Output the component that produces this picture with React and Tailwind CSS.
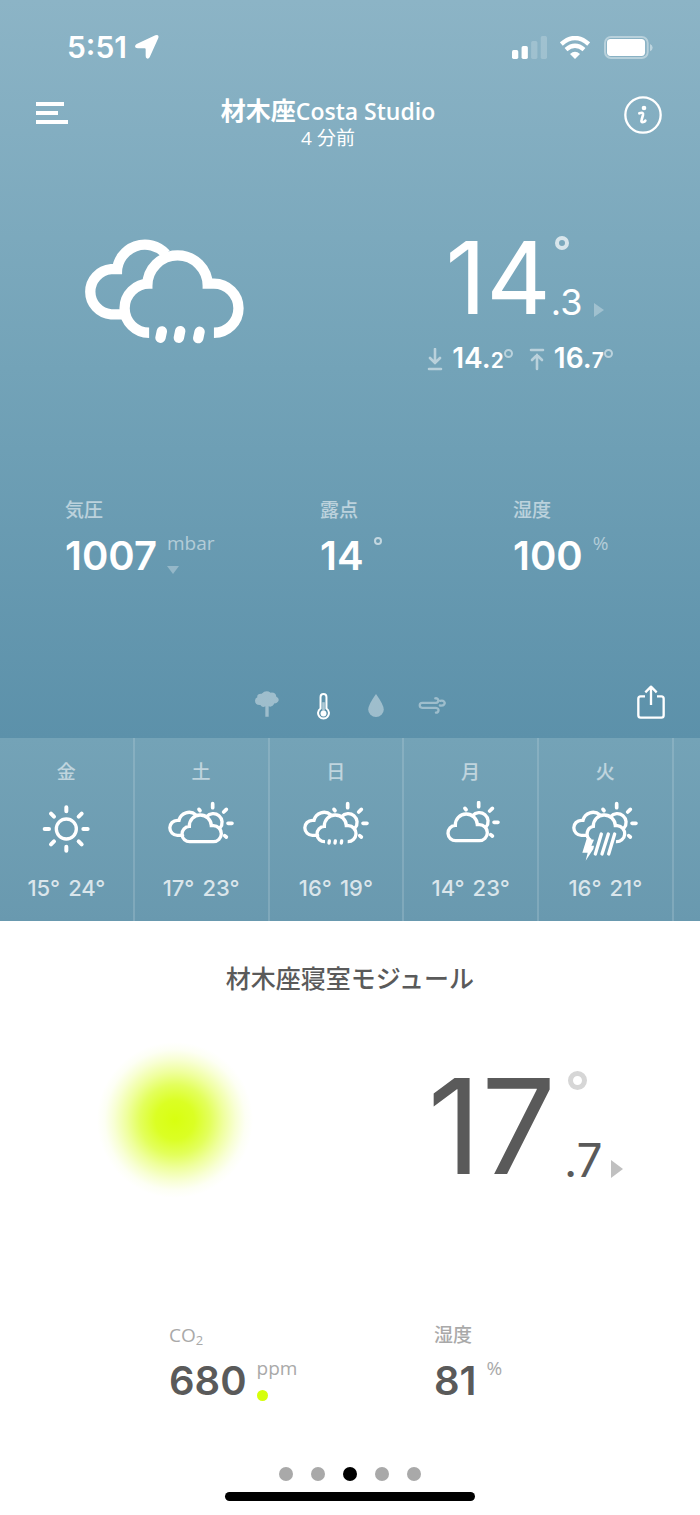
import React from "react";

const DAYS = [
  { day: "金", icon: "sun", low: 15, high: 24, name: "晴れ" },
  { day: "土", icon: "clouds", low: 17, high: 23, name: "曇り時々晴れ" },
  { day: "日", icon: "rain", low: 16, high: 19, name: "小雨" },
  { day: "月", icon: "partly", low: 14, high: 23, name: "晴れ時々曇り" },
  { day: "火", icon: "storm", low: 16, high: 21, name: "雷雨" },
];

const BACK_CLOUD = "M548 286H532A22.5 22.5 0 0 1 532 241H537A31 31 0 0 1 588 225";
const CLOSED_CLOUD = "M570 305A23 23 0 0 1 568 259A33 33 0 0 1 634 257H640A23.5 23.5 0 0 1 640 305Z";
const OPEN_CLOUD = "M570 305A23 23 0 0 1 568 259A33 33 0 0 1 634 257H640A23.5 23.5 0 0 1 638 305";
const HIDDEN_SUN = "M620 230A26 26 0 0 1 660 264";
const HIDDEN_RAYS = "M638 191V203M671 216L679 208M684 250H696M674 287L679 291M597 208L600 212";

function ForecastIcon({ kind, label }) {
  const box = {
    sun: "101 183 198 180",
    clouds: "504 183 198 180",
    rain: "504 183 198 180",
    partly: "516 186 198 180",
    storm: "504 183 198 180",
  }[kind];
  return (
    <svg
      role="img"
      aria-label={label}
      viewBox={box}
      className="h-[60px] w-[66px]"
      fill="none"
      stroke="white"
      strokeWidth="10"
    >
      {kind === "sun" ? (
        <>
          <circle cx="201" cy="267" r="30" />
          <path
            strokeLinecap="round"
            strokeWidth="12"
            d="M201 202V214M201 320V332M136 267H149M252 267H265M155 221L164 230M238 304L247 313M155 313L164 304M238 230L247 221"
          />
        </>
      ) : (
        <>
          <path strokeLinecap="round" d={HIDDEN_SUN} />
          <path strokeLinecap="round" strokeWidth="11" d={HIDDEN_RAYS} />
        </>
      )}
      {kind === "clouds" && <path strokeLinecap="round" d={BACK_CLOUD + CLOSED_CLOUD} />}
      {kind === "partly" && <path strokeLinecap="round" d={CLOSED_CLOUD} />}
      {kind === "rain" && (
        <>
          <path strokeLinecap="round" d={BACK_CLOUD} />
          <path d={OPEN_CLOUD} />
          <path strokeLinecap="round" d="M583 303L582 309M601 303L600 309M620 303L619 309" />
        </>
      )}
      {kind === "storm" && (
        <>
          <path strokeLinecap="round" d={BACK_CLOUD} />
          <path d="M560 301A23 23 0 0 1 568 259A33 33 0 0 1 634 257H640A23.5 23.5 0 0 1 636 305" />
          <path strokeLinecap="round" d="M592 282L574 342M613 282L594 342M632 282L614 342" />
          <path fill="white" stroke="none" d="M548 296L570 299L562 317H570L568 327L545 362L551 338H535Z" />
        </>
      )}
    </svg>
  );
}

function Metric({ label, value, unit, dark, children }) {
  return (
    <div>
      <h3 className={"h-6 text-[19px] leading-6 font-medium " + (dark ? "text-[#a9a9a9]" : "text-white/55")}>{label}</h3>
      <div className="mt-[9px] flex">
        <span
          className={
            "font-['Inter'] text-[40px] leading-[50px] font-semibold " + (dark ? "text-[#5a5a5a]" : "text-white")
          }
        >
          {value}
        </span>
        <span className="ml-[10px] flex flex-col">
          <span className={"text-[19px] leading-6 " + (dark ? "text-[#a9a9a9]" : "text-white/50")}>{unit}</span>
          {children}
        </span>
      </div>
    </div>
  );
}

function Extreme({ whole, tenth, path, label }) {
  return (
    <div className="flex items-center" aria-label={label}>
      <svg viewBox="0 0 16 24" className="mr-[9px] h-6 w-4 opacity-50" fill="none" stroke="white" strokeWidth="2.6" strokeLinecap="round">
        <path d={path} />
      </svg>
      <span className="font-['Inter'] text-[28px] leading-7 font-semibold">
        {whole}.<span className="text-[21px]">{tenth}</span>
      </span>
      <span className="mb-3 h-[9px] w-[9px] rounded-full border-2 border-white/50" />
    </div>
  );
}

export default function App() {
  return (
    <main className="min-h-screen w-full overflow-hidden bg-white font-['Open_Sans','Noto_Sans_CJK_JP',sans-serif]">
      <section className="bg-linear-to-b from-[#8cb4c6] via-[#73a3b8] to-[#5c91aa] text-white">
        <div className="flex h-[62px] items-end justify-between pr-[47px] pl-[67px]">
          <div className="flex items-center gap-2">
            <time className="font-['Inter'] text-[30px] leading-[30px] font-semibold">5:51</time>
            <svg viewBox="0 0 72 72" className="h-6 w-6" fill="white" aria-hidden="true">
              <path d="M5 27L61 1Q73 -3 70 9L44 67Q40 73 35 70Q32 68 32 62V43Q32 40 29 40H8Q0 40 0 34Q1 29 5 27Z" />
            </svg>
          </div>
          <div className="flex h-[30px] items-center">
            <svg viewBox="0 0 106 69" className="h-[23px] w-[35px]" fill="white" aria-label="電波">
              <rect y="42" width="19" height="27" rx="5" />
              <rect x="29" y="30" width="19" height="39" rx="5" />
              <rect x="58" y="15" width="19" height="54" rx="5" opacity=".2" />
              <rect x="87" y="0" width="19" height="69" rx="5" opacity=".2" />
            </svg>
            <svg viewBox="0 0 90 69" className="ml-[13px] h-[23px] w-[30px]" fill="none" stroke="white" strokeWidth="13" aria-label="Wi-Fi">
              <path d="M4 24Q45 -12 86 24M18 41Q45 18 72 41" />
              <path d="M30 54Q45 41 60 54L45 69Z" fill="white" stroke="none" />
            </svg>
            <svg viewBox="0 0 148 69" className="ml-[14px] h-[23px] w-[49px]" fill="none" aria-label="バッテリー">
              <rect x="3" y="3" width="129" height="63" rx="18" stroke="white" strokeOpacity=".4" strokeWidth="6" />
              <rect x="9" y="9" width="115" height="51" rx="11" fill="white" />
              <path d="M139 24Q147 28 147 35T139 46Z" fill="white" opacity=".45" />
            </svg>
          </div>
        </div>

        <header className="mt-[33px] flex items-start pr-[38px] pl-9">
          <button type="button" aria-label="メニュー" className="mt-[7px]">
            <svg viewBox="0 0 32 22" className="h-[22px] w-8" fill="white">
              <path d="M0 0H28V4H0ZM0 9H22V13H0ZM0 18H32V22H0Z" />
            </svg>
          </button>
          <div className="flex-1 pr-9 text-center">
            <h1 className="h-[30px] text-[25px] leading-[30px] font-semibold">
              材木座<span className="text-[23px]">Costa Studio</span>
            </h1>
            <p className="text-[19px] leading-[26px]">4 分前</p>
          </div>
          <button type="button" aria-label="情報">
            <svg viewBox="0 0 114 114" className="mt-px h-[38px] w-[38px]" fill="none" stroke="white" strokeWidth="7">
              <circle cx="57" cy="57" r="53" />
              <circle cx="60" cy="36" r="7" fill="white" stroke="none" />
              <path d="M46 52Q59 47 57 57L53 71Q50 80 58 78Q62 77 64 74" strokeWidth="8" strokeLinecap="round" />
            </svg>
          </button>
        </header>

        <div className="mt-[75px] grid grid-cols-2">
          <div className="flex justify-center pt-3 pr-[23px]">
            <svg role="img" aria-label="小雨" viewBox="72 56 482 316" className="h-[106px] w-[161px]" fill="none" stroke="white" strokeWidth="31">
              <path d="M188 148.5H156A68 68 0 0 0 156 284H195M173.5 164V157A84 84 0 0 1 320 103" />
              <path d="M270 339A73.5 73.5 0 0 1 270 192H279M264.5 207V198A90.5 90.5 0 0 1 445.5 198V207M432 192H464A73.5 73.5 0 0 1 464 339" />
              <path strokeLinecap="round" d="M308 335L304 354M363 334L359 354M421 336L417 355" />
            </svg>
          </div>
          <div className="flex flex-col items-center">
            <div className="flex h-[100px]">
              <span className="font-['Inter'] text-[100px] leading-[104px]">14</span>
              <span className="flex flex-col justify-between pt-[10px] pb-[6px]">
                <span className="ml-1 h-[14px] w-[14px] rounded-full border-4 border-white/70" />
                <span className="font-['Inter'] text-[36px] leading-9">.3</span>
              </span>
              <svg viewBox="0 0 10 14" className="mb-[9px] ml-3 h-[14px] w-[10px] self-end" fill="white" fillOpacity=".3" aria-hidden="true">
                <path d="M0 0L10 7L0 14Z" />
              </svg>
            </div>
            <div className="mt-[18px] flex gap-4 pr-[10px]">
              <Extreme label="最低" whole="14" tenth="2" path="M8 1V15M3 10L8 15L13 10M2 21H14" />
              <Extreme label="最高" whole="16" tenth="7" path="M8 21V7M3 12L8 7L13 12M2 2H14" />
            </div>
          </div>
        </div>

        <div className="mt-[123px] grid grid-cols-[255fr_193fr_187fr] pl-[65px]">
          <Metric label="気圧" value="1007" unit="mbar">
            <svg viewBox="0 0 12 8" className="mt-[11px] h-2 w-3" fill="white" fillOpacity=".3" aria-hidden="true">
              <path d="M0 0H12L6 8Z" />
            </svg>
          </Metric>
          <Metric label="露点" value="14">
            <span className="mt-[6px] h-2 w-2 rounded-full border-2 border-white/60" />
          </Metric>
          <Metric label="湿度" value="100" unit="%" />
        </div>

        <div className="mt-[105px] grid grid-cols-[1fr_auto_1fr] items-center pb-4">
          <nav className="col-start-2 flex h-9 items-center" aria-label="測定値">
            <button type="button" aria-label="空気質">
              <svg viewBox="0 0 72 78" className="h-[26px] w-6" fill="white" fillOpacity=".4">
                <path d="M31 77V46Q22 51 16 42Q1 43 0 29Q0 21 7 19Q5 7 20 8Q33-5 47 5Q62 3 64 17Q74 22 70 31Q66 38 58 37Q52 50 41 46V77Z" />
              </svg>
            </button>
            <button type="button" aria-label="温度" aria-pressed="true" className="ml-[38px]">
              <svg viewBox="0 0 38 82" className="mt-1 h-[27px] w-[13px]" fill="none" stroke="white" strokeWidth="6">
                <path d="M10 47V12A9 9 0 0 1 28 12V47A16.5 16.5 0 1 1 10 47Z" />
                <path d="M19 28V54" strokeWidth="8" strokeOpacity=".5" />
                <circle cx="19" cy="62" r="9" fill="white" stroke="none" />
              </svg>
            </button>
            <button type="button" aria-label="雨量" className="ml-[38px]">
              <svg viewBox="0 0 46 68" className="mt-[3px] h-[23px] w-4" fill="white" fillOpacity=".4">
                <path d="M23 0Q46 32 46 46A23 22 0 0 1 0 46Q0 32 23 0Z" />
              </svg>
            </button>
            <button type="button" aria-label="風" className="ml-[34px]">
              <svg viewBox="0 0 84 52" className="mt-[3px] h-[17px] w-7" fill="none" stroke="white" strokeOpacity=".4" strokeWidth="7" strokeLinecap="round">
                <path d="M52 4C63 2 65 17 54 18H12A7 7 0 0 0 12 33H54C66 34 63 48 54 48M67 12C77 8 84 17 79 23Q76 27 66 26" />
              </svg>
            </button>
          </nav>
          <button type="button" aria-label="共有" className="mr-[35px] justify-self-end">
            <svg viewBox="0 0 84 102" className="-mt-1 h-[34px] w-7" fill="none" stroke="white" strokeWidth="7" strokeLinejoin="round">
              <path d="M24 34H11Q4 34 4 41V91Q4 98 11 98H73Q80 98 80 91V41Q80 34 73 34H60M42 60V6M25 22L42 5L59 22" />
            </svg>
          </button>
        </div>
      </section>

      <section aria-label="週間予報" className="flex h-[183px] overflow-hidden bg-linear-to-b from-[#74a3b7] to-[#6999af]">
        {DAYS.map((d) => (
          <article key={d.day} className="flex w-[19.25%] shrink-0 flex-col items-center border-r-2 border-white/15 pt-[22px]">
            <h2 className="text-[19px] leading-6 font-medium text-white/55">{d.day}</h2>
            <div className="mt-[17px] h-[60px]">
              <ForecastIcon kind={d.icon} label={d.name} />
            </div>
            <p className="mt-[13px] flex gap-2 font-['Inter'] text-[22px] leading-7 font-medium text-white/75">
              <span>{d.low}°</span>
              <span>{d.high}°</span>
            </p>
          </article>
        ))}
      </section>

      <section className="pt-[39px] pb-[14px] text-[#5a5a5a]">
        <h2 className="text-center text-[25px] leading-9 font-medium">材木座寝室モジュール</h2>
        <div className="mt-[46px] grid h-[150px] grid-cols-2 items-center">
          <div className="flex justify-center">
            <div className="h-[156px] w-[156px] rounded-full bg-[radial-gradient(closest-side,#d8ff10_0%,#dbff24_25%,#e3ff5c_45%,#efff9e_62%,#f8ffd4_78%,#fdfff4_90%,#ffffff_100%)]" />
          </div>
          <div className="flex justify-center pt-3">
            <div className="flex h-[130px]">
              <span className="font-['Inter'] text-[132px] leading-[130px]">17</span>
              <span className="ml-2 flex flex-col justify-between pt-[10px] pb-[8px]">
                <span className="ml-1 h-[19px] w-[19px] rounded-full border-5 border-[#d6d6d6]" />
                <span className="font-['Inter'] text-[46px] leading-[46px]">.7</span>
              </span>
              <svg viewBox="0 0 12 18" className="mb-[13px] ml-2 h-[18px] w-3 self-end" fill="#c0c0c0" aria-hidden="true">
                <path d="M0 0L12 9L0 18Z" />
              </svg>
            </div>
          </div>
        </div>
        <div className="mt-[131px] grid grid-cols-[265fr_266fr] pl-[169px]">
          <Metric dark label={<>CO<sub className="text-[13px]">2</sub></>} value="680" unit="ppm">
            <span className="mt-[10px] h-[11px] w-[11px] rounded-full bg-[#d6ff0a]" />
          </Metric>
          <Metric dark label="湿度" value="81" unit="%" />
        </div>
        <nav className="mt-[61px] flex justify-center gap-[18px]" aria-label="ページ">
          {[1, 2, 3, 4, 5].map((n) => (
            <button
              key={n}
              type="button"
              aria-label={"ページ " + n}
              className={"h-[14px] w-[14px] rounded-full " + (n === 3 ? "bg-black" : "bg-[#a9a9a9]")}
            />
          ))}
        </nav>
        <div className="mx-auto mt-[11px] h-[9px] w-[250px] rounded-full bg-black" />
      </section>
    </main>
  );
}
